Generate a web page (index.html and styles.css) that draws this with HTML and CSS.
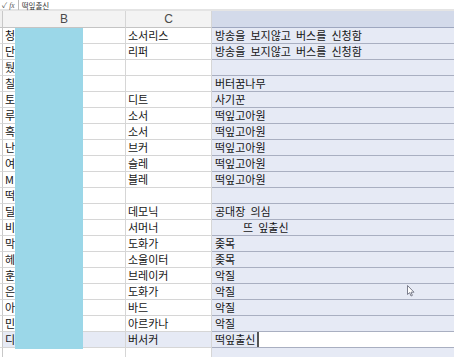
FILE: index.html
```html
<!DOCTYPE html>
<html lang="ko">
<head>
    <meta charset="UTF-8">
    <meta name="viewport" content="width=device-width, initial-scale=1.0">
    <title>시트</title>
    <link rel="stylesheet" href="styles.css">
</head>
<body>
    <div class="formula-bar">
        <span class="fx-icons">✓ <i>fx</i></span>
        <span class="formula">떡잎출신</span>
    </div>

    <div class="sheet">
        <div class="row head">
            <div class="edge"></div>
            <div class="cell ch">B</div>
            <div class="cell ch">C</div>
            <div class="cell ch sel"></div>
        </div>

        <div class="row"><div class="edge"></div><div class="cell">청</div><div class="cell">소서리스</div><div class="cell sel">방송을 보지않고 버스를 신청함</div></div>
        <div class="row"><div class="edge"></div><div class="cell">단</div><div class="cell">리퍼</div><div class="cell sel">방송을 보지않고 버스를 신청함</div></div>
        <div class="row"><div class="edge"></div><div class="cell">퉜</div><div class="cell"></div><div class="cell sel"></div></div>
        <div class="row"><div class="edge"></div><div class="cell">칠</div><div class="cell"></div><div class="cell sel">버터꿈나무</div></div>
        <div class="row"><div class="edge"></div><div class="cell">토</div><div class="cell">디트</div><div class="cell sel">사기꾼</div></div>
        <div class="row"><div class="edge"></div><div class="cell">루</div><div class="cell">소서</div><div class="cell sel">떡잎고아원</div></div>
        <div class="row"><div class="edge"></div><div class="cell">흑</div><div class="cell">소서</div><div class="cell sel">떡잎고아원</div></div>
        <div class="row"><div class="edge"></div><div class="cell">난</div><div class="cell">브커</div><div class="cell sel">떡잎고아원</div></div>
        <div class="row"><div class="edge"></div><div class="cell">여</div><div class="cell">슬레</div><div class="cell sel">떡잎고아원</div></div>
        <div class="row"><div class="edge"></div><div class="cell">M</div><div class="cell">블레</div><div class="cell sel">떡잎고아원</div></div>
        <div class="row"><div class="edge"></div><div class="cell">떡</div><div class="cell"></div><div class="cell sel"></div></div>
        <div class="row"><div class="edge"></div><div class="cell">딜</div><div class="cell">데모닉</div><div class="cell sel">공대장 의심</div></div>
        <div class="row"><div class="edge"></div><div class="cell">비</div><div class="cell">서머너</div><div class="cell sel indent">뜨 잎출신</div></div>
        <div class="row"><div class="edge"></div><div class="cell">막</div><div class="cell">도화가</div><div class="cell sel">좆목</div></div>
        <div class="row"><div class="edge"></div><div class="cell">헤</div><div class="cell">소울이터</div><div class="cell sel">좆목</div></div>
        <div class="row"><div class="edge"></div><div class="cell">훈</div><div class="cell">브레이커</div><div class="cell sel">악질</div></div>
        <div class="row"><div class="edge"></div><div class="cell">은</div><div class="cell">도화가</div><div class="cell sel">악질</div></div>
        <div class="row"><div class="edge"></div><div class="cell">아</div><div class="cell">바드</div><div class="cell sel">악질</div></div>
        <div class="row"><div class="edge"></div><div class="cell">민</div><div class="cell">아르카나</div><div class="cell sel">악질</div></div>
        <div class="row active"><div class="edge"></div><div class="cell">디</div><div class="cell">버서커</div><div class="cell sel editing"><span class="edit-text">떡잎출신</span><span class="edit-box"></span></div></div>
        <div class="row"><div class="edge"></div><div class="cell"></div><div class="cell"></div><div class="cell sel"></div></div>

        <div class="mask"></div>
        <svg class="pointer" width="8" height="12" viewBox="0 0 8 12">
            <path d="M0.5 0.5 L0.5 9.5 L2.6 7.6 L4 11 L5.4 10.4 L4 7.2 L7 7.2 Z" fill="#fff" stroke="#6d7080" stroke-width="0.9"/>
        </svg>
    </div>
</body>
</html>
```

FILE: styles.css
```css
* {
    margin: 0;
    padding: 0;
    box-sizing: border-box;
}

body {
    background: #fff;
    font-family: "Noto Sans CJK KR", "Noto Sans", sans-serif;
    color: #151515;
    overflow: hidden;
}

.formula-bar {
    display: flex;
    align-items: center;
    height: 11px;
    padding: 1px 0 0 2px;
    font-size: 7.5px;
    line-height: 9px;
    color: #333;
    border-bottom: 2px solid #e4e4e4;
}

.fx-icons {
    color: #555;
    padding-right: 3px;
    border-right: 1px solid #bbb;
}

.fx-icons i {
    font-family: "Liberation Serif", serif;
}

.formula {
    padding-left: 3px;
}

.sheet {
    position: relative;
}

.row {
    display: grid;
    grid-template-columns: 3px 123px 86px 1fr;
    height: 16px;
}

.edge {
    border-right: 1px solid #c8c8c8;
    border-bottom: 1px solid #dcdcdc;
}

.cell {
    font-size: 11px;
    line-height: 15px;
    padding-left: 2px;
    white-space: nowrap;
    overflow: hidden;
    border-right: 1px solid #d6d6d6;
    border-bottom: 1px solid #d6d6d6;
}

.cell.sel {
    background: #e6eaf5;
    padding-left: 3px;
    word-spacing: 2px;
    border-right: none;
    border-bottom: 1px solid #a9afc1;
}

.head {
    height: 17px;
}

.head .edge {
    background: #f0f0f0;
    border-bottom: 1px solid #c4c4c4;
}

.ch {
    background: #f3f3f3;
    color: #4a4a4a;
    text-align: center;
    font-family: "Liberation Sans", sans-serif;
    font-size: 12px;
    line-height: 16px;
    padding-left: 0;
    border-bottom: 1px solid #c4c4c4;
}

.ch.sel {
    background: #d3daea;
    border-bottom: 1px solid #9ea7bf;
}

.cell.indent {
    padding-left: 31px;
}

.active .cell {
    background: #e6eaf5;
}

.editing {
    display: flex;
}

.edit-text {
    padding-right: 2px;
}

.edit-box {
    flex: 1;
    background: #fff;
    border-left: 2px solid #555;
}

.mask {
    position: absolute;
    left: 15px;
    top: 17px;
    width: 68px;
    height: 321px;
    background: #9bd7e8;
}

.pointer {
    position: absolute;
    left: 407px;
    top: 274px;
}
```
